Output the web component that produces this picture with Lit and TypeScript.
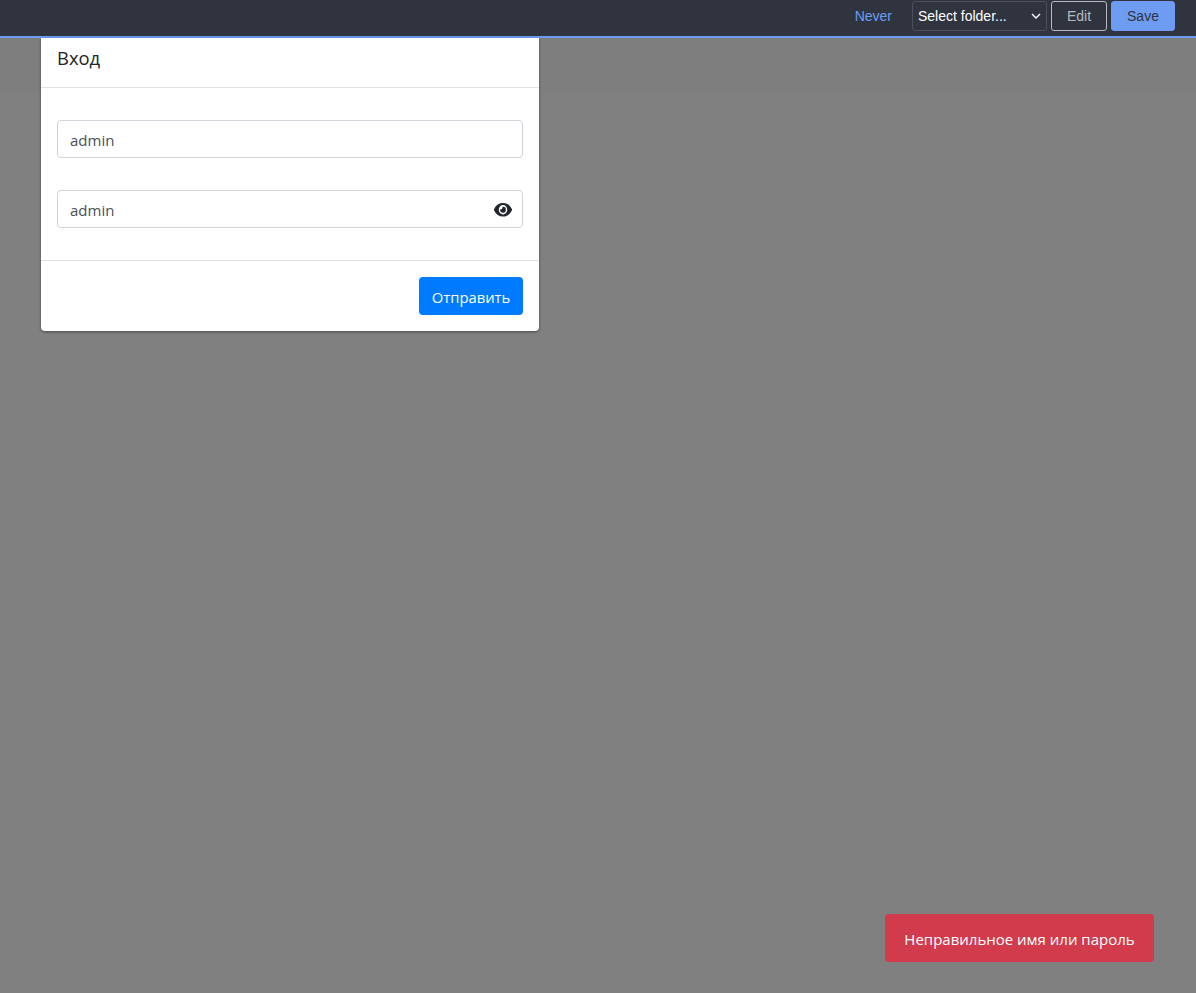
import { LitElement, html, css } from "lit";
import { customElement } from "lit/decorators.js";

@customElement("app-root")
export class AppRoot extends LitElement {
  static styles = css`
    :host {
      display: block;
      position: relative;
      height: 993px;
      overflow: hidden;
      background: #808080;
      font-family: "Open Sans", "Noto Sans", sans-serif;
      color: #212529;
    }

    /* top toolbar */
    .toolbar {
      display: flex;
      align-items: center;
      justify-content: flex-end;
      gap: 4px;
      box-sizing: border-box;
      height: 38px;
      padding: 0 21px 4px 0;
      background: #2f343f;
      border-bottom: 2px solid #6d9cf2;
      font-family: "Liberation Sans", Arial, sans-serif;
      font-size: 14px;
    }
    .never {
      color: #6d9cf2;
      margin-right: 16px;
    }
    .select {
      display: flex;
      align-items: center;
      justify-content: space-between;
      box-sizing: border-box;
      width: 135px;
      height: 30px;
      padding: 0 5px 0 5px;
      color: #fff;
      background: #2f343f;
      border: 1px solid #4b505b;
      border-radius: 3px;
    }
    .btn {
      box-sizing: border-box;
      height: 30px;
      font: inherit;
      border-radius: 3px;
    }
    .edit {
      width: 56px;
      color: #b6b9c0;
      background: transparent;
      border: 1px solid #b6b9c0;
    }
    .save {
      width: 64px;
      color: #2f343f;
      background: #6d9cf2;
      border: 1px solid #6d9cf2;
    }

    /* login card */
    .band {
      height: 56px;
      background: #7e7e7e;
    }
    .card {
      position: absolute;
      top: 38px;
      left: 41px;
      width: 498px;
      box-sizing: border-box;
      background: #fff;
      border-radius: 0 0 4px 4px;
      box-shadow: 0 1px 3px rgba(0, 0, 0, 0.45);
    }
    .card-header {
      box-sizing: border-box;
      height: 50px;
      padding: 0 16px 10px;
      display: flex;
      align-items: center;
      font-size: 18.4px;
      border-bottom: 1px solid #dee2e6;
    }
    .card-body {
      display: flex;
      flex-direction: column;
      gap: 32px;
      padding: 32px 16px;
    }
    .field {
      position: relative;
      box-sizing: border-box;
      height: 38px;
      padding: 2px 12px 0;
      display: flex;
      align-items: center;
      font-size: 15px;
      color: #495057;
      border: 1px solid #ced4da;
      border-radius: 4px;
    }
    .eye {
      position: absolute;
      right: 10px;
      top: 12px;
      width: 18px;
      height: 13.5px;
    }
    .eye-outer {
      fill: #212529;
      stroke: #212529;
      stroke-width: 40;
    }
    .eye-ring {
      fill: #fff;
    }
    .eye-pupil {
      fill: #212529;
    }
    .card-footer {
      display: flex;
      justify-content: flex-end;
      padding: 16px;
      border-top: 1px solid #dee2e6;
    }
    .submit {
      box-sizing: border-box;
      width: 104px;
      height: 38px;
      padding: 2px 0 0;
      font: inherit;
      font-size: 14.8px;
      color: #fff;
      background: #007bff;
      border: 0;
      border-radius: 4px;
    }

    /* error toast */
    .toast {
      position: absolute;
      right: 42px;
      bottom: 31px;
      box-sizing: border-box;
      width: 269px;
      height: 48px;
      padding-top: 2px;
      display: flex;
      align-items: center;
      justify-content: center;
      font-size: 15px;
      color: #fff;
      background: #d13b4c;
      border-radius: 4px;
    }
  `;

  render() {
    return html`
      <div class="toolbar">
        <span class="never">Never</span>
        <div class="select">
          Select folder...
          <svg width="10" height="6" viewBox="0 0 10 6" fill="none" stroke="#fff" stroke-width="1.4">
            <path d="M1 1l4 4 4-4" />
          </svg>
        </div>
        <button class="btn edit">Edit</button>
        <button class="btn save">Save</button>
      </div>
      <div class="band"></div>

      <div class="card">
        <div class="card-header">Вход</div>
        <div class="card-body">
          <div class="field">admin</div>
          <div class="field">
            admin
            <svg class="eye" viewBox="-20 44 616 424" preserveAspectRatio="none">
              <path
                class="eye-outer"
                d="M572.5 241.4C518.3 135.6 410.9 64 288 64S57.7 135.6 3.5 241.4a32.4 32.4 0 0 0 0 29.2C57.7 376.4 165.1 448 288 448s230.3-71.6 284.5-177.4a32.4 32.4 0 0 0 0-29.2z"
              />
              <circle class="eye-ring" cx="288" cy="256" r="146" />
              <path
                class="eye-pupil"
                d="M288 160a95.3 95.3 0 0 0-25.3 3.8 47.9 47.9 0 0 1-66.9 66.9A95.8 95.8 0 1 0 288 160z"
              />
            </svg>
          </div>
        </div>
        <div class="card-footer">
          <button class="submit">Отправить</button>
        </div>
      </div>

      <div class="toast">Неправильное имя или пароль</div>
    `;
  }
}
